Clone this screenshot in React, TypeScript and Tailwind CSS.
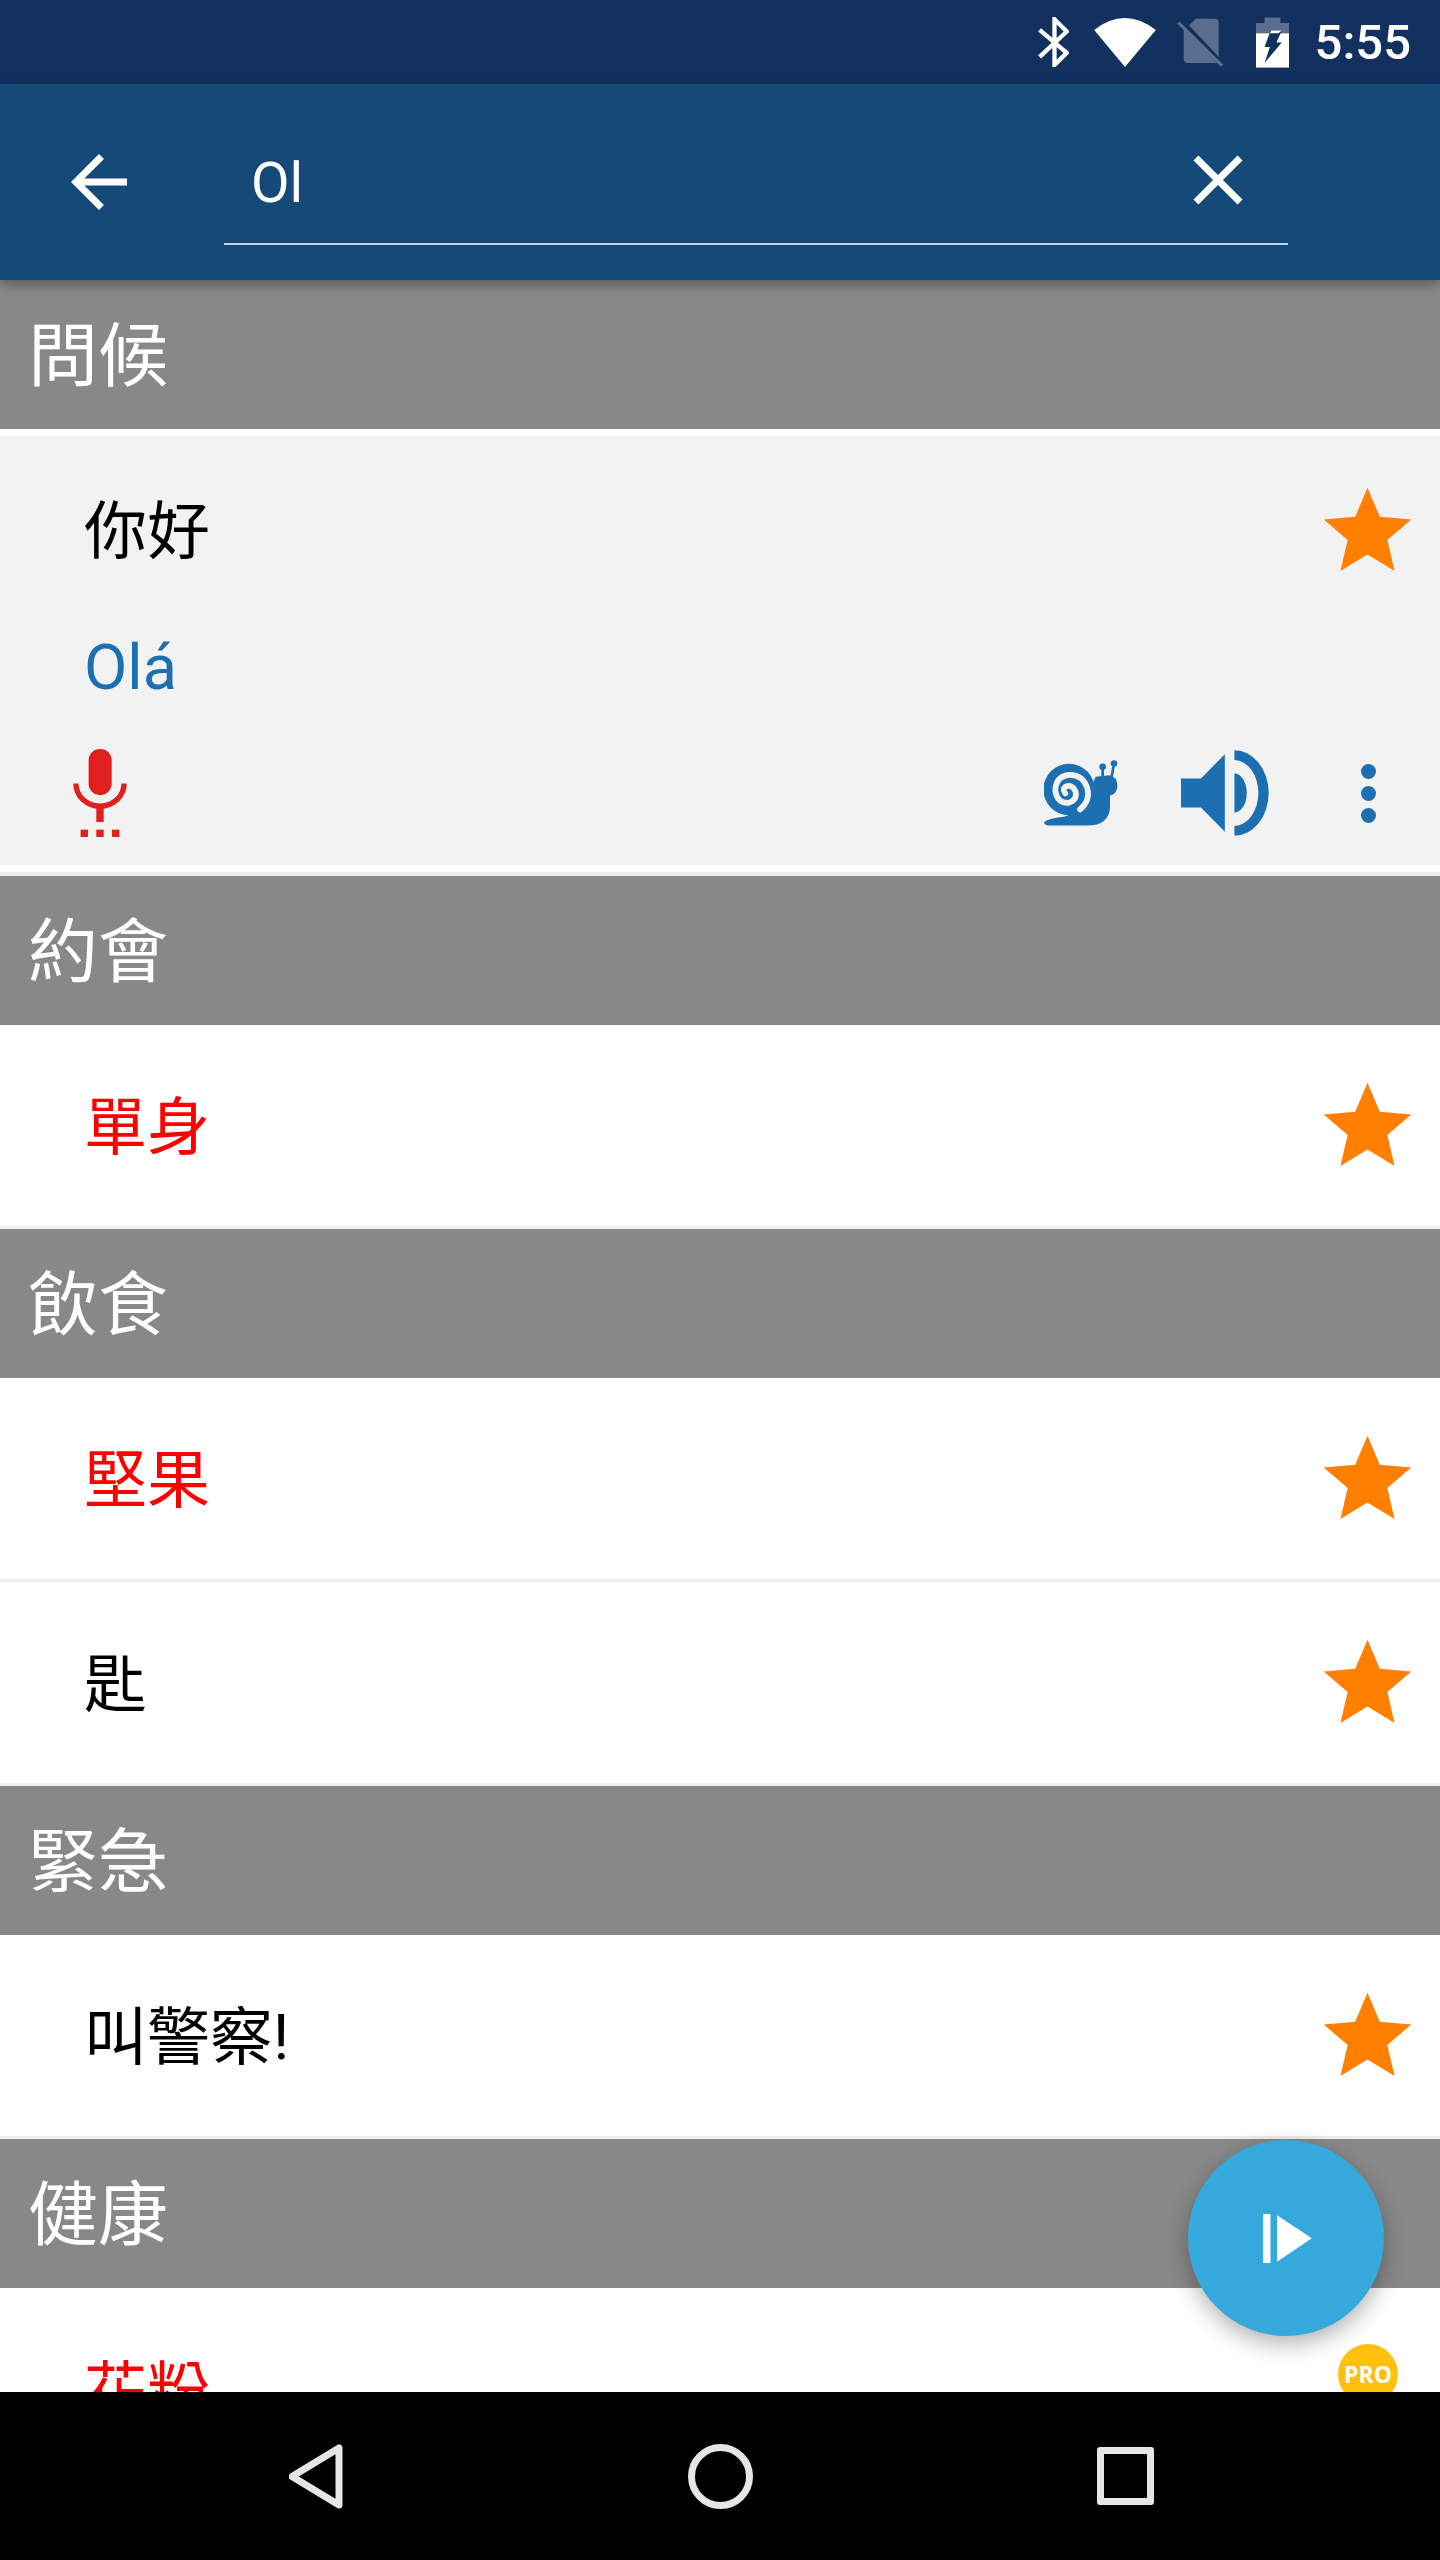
import React from "react";

const Star = () => (
  <svg viewBox="0 0 24 24" className="w-[105px] h-[105px] shrink-0 mt-[2px] fill-[#ff8000]">
    <path d="M12 17.27L18.18 21l-1.64-7.03L22 9.24l-7.19-.61L12 2 9.19 8.63 2 9.24l5.46 4.73L5.82 21z" />
  </svg>
);

const StatusIcons = () => (
  <div className="flex items-center">
    <svg viewBox="238 52 94 150" className="w-[31px] h-[50px]" fill="none" stroke="#fff" strokeWidth="13">
      <path d="M243 90L325 160L288 197V58L325 95L243 172" />
    </svg>
    <svg viewBox="408 50 186 148" className="w-[62px] h-[49px] ml-[25px] fill-white">
      <path d="M408 86Q500 14 594 86L501 198z" />
    </svg>
    <svg viewBox="656 56 140 146" className="w-[47px] h-[49px] ml-[21px]">
      <path d="M712 58H768Q780 58 780 70V190H688Q676 190 676 178V94z" fill="#fff" fillOpacity="0.3" />
      <path d="M666 62L792 196" stroke="#13315f" strokeWidth="16" />
      <path d="M660 70L790 198" stroke="#5a7090" strokeWidth="9" />
    </svg>
    <svg viewBox="890 48 100 152" className="w-[33px] h-[51px] ml-[32px]">
      <path d="M916 48H964V65H990V96H890V65H916z" fill="#fff" fillOpacity="0.3" />
      <rect x="890" y="96" width="100" height="104" fill="#fff" />
      <path d="M934 88H968L952 124H968L916 186L932 138H916z" fill="#13315f" />
      <path d="M936 88H968L958 96H932z" fill="#fff" />
    </svg>
    <span className="ml-[26px] text-[49px] leading-none font-medium text-white font-['Roboto',sans-serif]">5:55</span>
  </div>
);

const Snail = () => (
  <svg viewBox="190 120 222 200" className="w-[74px] h-[67px]">
    <g fill="#1c70b2">
      <circle cx="265" cy="208" r="77" />
      <path d="M190 306Q200 296 250 290L300 272L345 170L385 165Q412 170 410 200Q408 222 388 226V262Q385 316 320 316H210Q190 316 190 306z" />
      <circle cx="366" cy="140" r="10" />
      <circle cx="400" cy="130" r="10" />
    </g>
    <path d="M366 140V175M400 130L392 175" stroke="#1c70b2" strokeWidth="8" fill="none" />
    <path
      d="M298 268Q330 240 320 204Q306 162 264 164Q224 170 224 212Q230 250 264 248Q292 238 284 212Q272 190 254 200Q244 208 254 220"
      fill="none"
      stroke="#f2f2f2"
      strokeWidth="17"
      strokeLinecap="round"
    />
  </svg>
);

const Speaker = () => (
  <svg viewBox="600 90 265 258" className="w-[88px] h-[86px] mt-[-2px] fill-[#1c70b2]">
    <path d="M600 175H660L732 102V336L660 263H600z" />
    <path d="M761 160A37 59 0 0 1 761 278z" />
    <path d="M761 90A103 129 0 0 1 761 348V318A72 99 0 0 0 761 120z" />
  </svg>
);

const Mic = () => (
  <svg viewBox="220 387 160 263" className="w-[54px] h-[88px] mt-[-1px] fill-[#e01f1f]">
    <rect x="266" y="387" width="69" height="138" rx="34" />
    <path d="M228 490A72 68 0 0 0 372 490" fill="none" stroke="#e01f1f" strokeWidth="16" />
    <rect x="289" y="555" width="22" height="50" />
    <rect x="242" y="628" width="22" height="22" />
    <rect x="289" y="628" width="22" height="22" />
    <rect x="336" y="628" width="22" height="22" />
  </svg>
);

const Dots = () => (
  <div className="flex flex-col gap-[7px] w-[15px]">
    <div className="w-[15px] h-[15px] rounded-full bg-[#1c70b2]" />
    <div className="w-[15px] h-[15px] rounded-full bg-[#1c70b2]" />
    <div className="w-[15px] h-[15px] rounded-full bg-[#1c70b2]" />
  </div>
);

const Header = ({ title }: { title: string }) => (
  <div className="h-[149px] shrink-0 bg-[#888888] flex items-center pl-[28px] pt-[5px] text-[70px] leading-none text-white">
    {title}
  </div>
);

const Row = ({ text, red }: { text: string; red?: boolean }) => (
  <div className="h-[204px] shrink-0 bg-white border-b-[3px] border-[#eeeeee] flex items-center justify-between pl-[84px] pr-[20px]">
    <span className={red ? "text-[63px] leading-none mt-[3px] text-[#ff0000]" : "text-[63px] leading-none mt-[3px] text-black"}>{text}</span>
    <Star />
  </div>
);

export default function App() {
  return (
    <div className="relative w-[1440px] h-[2560px] flex flex-col overflow-hidden bg-white font-['Roboto','Noto_Sans_CJK_TC',sans-serif]">
      <div className="h-[84px] shrink-0 bg-[#13315f] flex items-center justify-end pr-[29px]">
        <StatusIcons />
      </div>

      <div className="relative z-10 h-[196px] shrink-0 bg-[#144978] flex items-center shadow-[0_4px_12px_rgba(0,0,0,0.35)]">
        <svg viewBox="0 0 24 24" className="w-[84px] h-[84px] ml-[57px] fill-white">
          <path d="M20 11H7.83l5.59-5.59L12 4l-8 8 8 8 1.41-1.41L7.83 13H20v-2z" />
        </svg>
        <div className="ml-[83px] w-[1064px] h-[128px] mt-[-2px] pt-[6px] border-b-[2px] border-[#c5d3e0] flex items-center justify-between pl-[27px] pr-[28px]">
          <span className="text-[56px] leading-none text-white">Ol</span>
          <svg viewBox="0 0 24 24" className="w-[84px] h-[84px] fill-white mt-[-6px]">
            <path d="M19 6.41L17.59 5 12 10.59 6.41 5 5 6.41 10.59 12 5 17.59 6.41 19 12 13.41 17.59 19 19 17.59 13.41 12z" />
          </svg>
        </div>
      </div>

      <div className="flex-1 min-h-0 overflow-hidden flex flex-col">
        <Header title="問候" />
        <div className="shrink-0 bg-white py-[7px] box-content h-[429px] border-b-4 border-[#eeeeee]">
          <div className="h-[429px] bg-[#f2f2f2] flex flex-col">
            <div className="h-[188px] shrink-0 flex items-center justify-between pl-[84px] pr-[20px]">
              <span className="text-[63px] leading-none mt-[3px] text-black">你好</span>
              <Star />
            </div>
            <div className="h-[84px] shrink-0 flex items-center pl-[84px] pt-[2px] text-[63px] leading-none text-[#1c70b2]">Olá</div>
            <div className="flex-1 flex items-center pt-[14px] pl-[73px] pr-[64px]">
              <Mic />
              <div className="ml-auto"><Snail /></div>
              <div className="ml-[63px]"><Speaker /></div>
              <div className="ml-[92px]"><Dots /></div>
            </div>
          </div>
        </div>
        <Header title="約會" />
        <Row text="單身" red />
        <Header title="飲食" />
        <Row text="堅果" red />
        <Row text="匙" />
        <Header title="緊急" />
        <Row text="叫警察!" />
        <Header title="健康" />
        <div className="h-[204px] shrink-0 bg-white flex items-center justify-between pl-[84px] pr-[42px]">
          <span className="text-[63px] leading-none mt-[3px] text-[#ff0000]">花粉</span>
          <div className="self-start mt-[56px] w-[60px] h-[60px] rounded-full bg-[#ffc10e] flex items-center justify-center text-[23px] leading-none font-bold text-white font-['Open_Sans',sans-serif]">
            PRO
          </div>
        </div>
      </div>

      <div className="h-[168px] shrink-0 bg-black flex items-center relative z-10">
        <svg viewBox="0 0 54 65" className="w-[54px] h-[65px] ml-[289px]" fill="none" stroke="#e6e6e6" strokeWidth="7" strokeLinejoin="round">
          <path d="M50 4V61L3 32.5z" />
        </svg>
        <div className="w-[65px] h-[65px] ml-[345px] rounded-full border-[7px] border-[#e6e6e6]" />
        <div className="w-[57px] h-[58px] ml-[344px] rounded-[3px] border-[7px] border-[#e6e6e6]" />
      </div>

      <div className="absolute z-20 left-[1188px] top-[2140px] w-[196px] h-[196px] rounded-full bg-[#36a9dc] flex items-center justify-center shadow-[0_8px_22px_rgba(0,0,0,0.3)]">
        <svg viewBox="489 340 147 148" className="w-[49px] h-[49px] ml-[2px] fill-white">
          <rect x="489" y="340" width="22" height="148" />
          <path d="M531 344L636 413L531 484z" />
        </svg>
      </div>
    </div>
  );
}
